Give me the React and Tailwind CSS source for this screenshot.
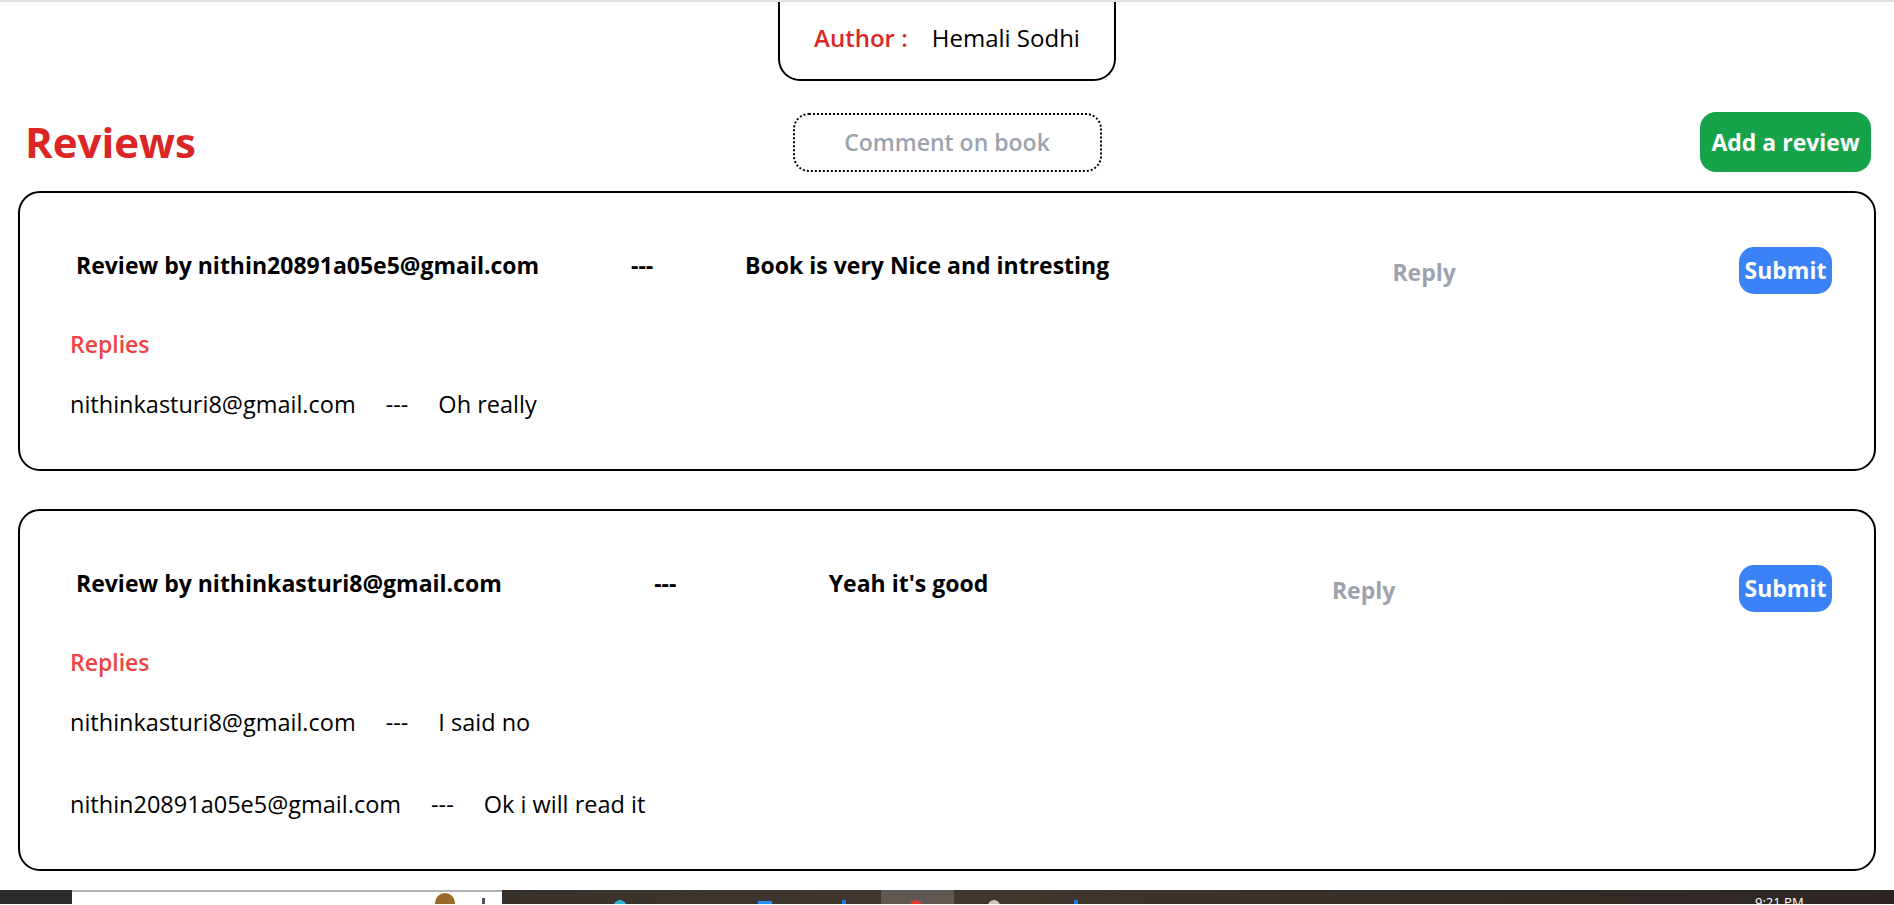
import React from "react";

const reviews = [
  {
    id: 1,
    user: "nithin20891a05e5@gmail.com",
    comment: "Book is very Nice and intresting",
    replies: [{ id: 11, user: "nithinkasturi8@gmail.com", text: "Oh really" }],
  },
  {
    id: 2,
    user: "nithinkasturi8@gmail.com",
    comment: "Yeah it's good",
    replies: [
      { id: 21, user: "nithinkasturi8@gmail.com", text: "I said no" },
      { id: 22, user: "nithin20891a05e5@gmail.com", text: "Ok i will read it" },
    ],
  },
];

const ReviewCard = ({ review }) => {
  return (
    <div className="mx-[18px] border-2 border-black rounded-[22px] pt-[54px] pb-[52px]">
      <div className="flex items-start justify-between pl-[56px] pr-[42px]">
        <span className="mt-[7px] text-[23px] leading-none font-bold text-black">
          Review by {review.user}
        </span>
        <span className="mt-[7px] text-[23px] leading-none font-bold text-black">---</span>
        <span className="mt-[7px] text-[23px] leading-none font-bold text-black">{review.comment}</span>
        <input
          placeholder="Reply"
          className="w-[446px] h-[47px] pt-[3px] text-center text-[23px] leading-none outline-none placeholder:text-[#9ca3af] placeholder:font-bold"
        />
        <button className="w-[93px] h-[47px] rounded-[15px] bg-[#3b82f6] text-white text-[23px] leading-none font-bold">
          Submit
        </button>
      </div>

      <div className="pl-[50px] mt-[39px] flex flex-col">
        <p className="text-[23px] leading-none font-semibold text-[#ef4444]">Replies</p>
        <div className="mt-[37px] flex flex-col gap-[59px]">
          {review.replies.map((r) => (
            <div key={r.id} className="flex gap-[30px] text-[23.5px] leading-none text-black">
              <span>{r.user}</span>
              <span>---</span>
              <span>{r.text}</span>
            </div>
          ))}
        </div>
      </div>
    </div>
  );
};

const Taskbar = () => (
  <div className="mt-[19px] h-[14px] overflow-hidden flex bg-gradient-to-r from-[#2f2b28] via-[#40372e] to-[#2c2522]">
    <div className="w-[72px] bg-[#2d2b29]" />
    <div className="w-[430px] bg-white border-t-2 border-[#b3b3b3] relative">
      <div className="absolute left-[363px] top-[1px] w-[20px] h-[20px] rounded-full bg-[#9a6a2c]" />
      <div className="absolute left-[410px] top-[6px] w-[3px] h-[10px] bg-[#5b4a6b]" />
    </div>
    <div className="relative flex-1">
      <div className="absolute left-[112px] top-[10px] w-[12px] h-[12px] rounded-full bg-[#2bb7d6]" />
      <div className="absolute left-[256px] top-[11px] w-[14px] h-[6px] bg-[#1e90ff]" />
      <div className="absolute left-[340px] top-[10px] w-[4px] h-[6px] bg-[#1e7be0]" />
      <div className="absolute left-[379px] top-0 w-[73px] h-[14px] bg-[#5f5853]" />
      <div className="absolute left-[408px] top-[10px] w-[12px] h-[12px] rounded-full bg-[#e53935]" />
      <div className="absolute left-[486px] top-[10px] w-[12px] h-[12px] rounded-full bg-[#c8c8c8]" />
      <div className="absolute left-[572px] top-[10px] w-[4px] h-[6px] bg-[#1e7be0]" />
      <span className="absolute left-[1253px] top-[6px] text-[13px] leading-none text-white">9:21 PM</span>
    </div>
  </div>
);

export default function App() {
  return (
    <div className="bg-white" style={{ fontFamily: '"Open Sans", sans-serif' }}>
      <div className="h-[2px] bg-[#e1e1e1]" />
      <div className="flex justify-center">
        <div className="h-[79px] border-x-2 border-b-2 border-black rounded-b-[22px] px-[34px] pt-[24px] flex items-start gap-[24px] text-[24px] leading-none">
          <span className="font-semibold text-[#dc2626]">Author :</span>
          <span className="text-black">Hemali Sodhi</span>
        </div>
      </div>

      <div className="mt-[31px] px-[23px] grid grid-cols-[1fr_auto_1fr] items-center">
        <h1 className="pl-[2px] text-[42px] leading-none font-bold text-[#dc2626]">Reviews</h1>
        <input
          placeholder="Comment on book"
          className="w-[309px] h-[59px] border-2 border-dotted border-black rounded-[16px] text-center text-[23px] outline-none placeholder:text-[#9ca3af] placeholder:font-semibold"
        />
        <div className="flex justify-end">
          <button className="w-[171px] h-[60px] rounded-[16px] bg-[#16a34a] text-white text-[23px] leading-none font-bold">
            Add a review
          </button>
        </div>
      </div>

      <div className="mt-[19px] flex flex-col gap-[38px]">
        {reviews.map((r) => (
          <ReviewCard key={r.id} review={r} />
        ))}
      </div>

      <Taskbar />
    </div>
  );
}
